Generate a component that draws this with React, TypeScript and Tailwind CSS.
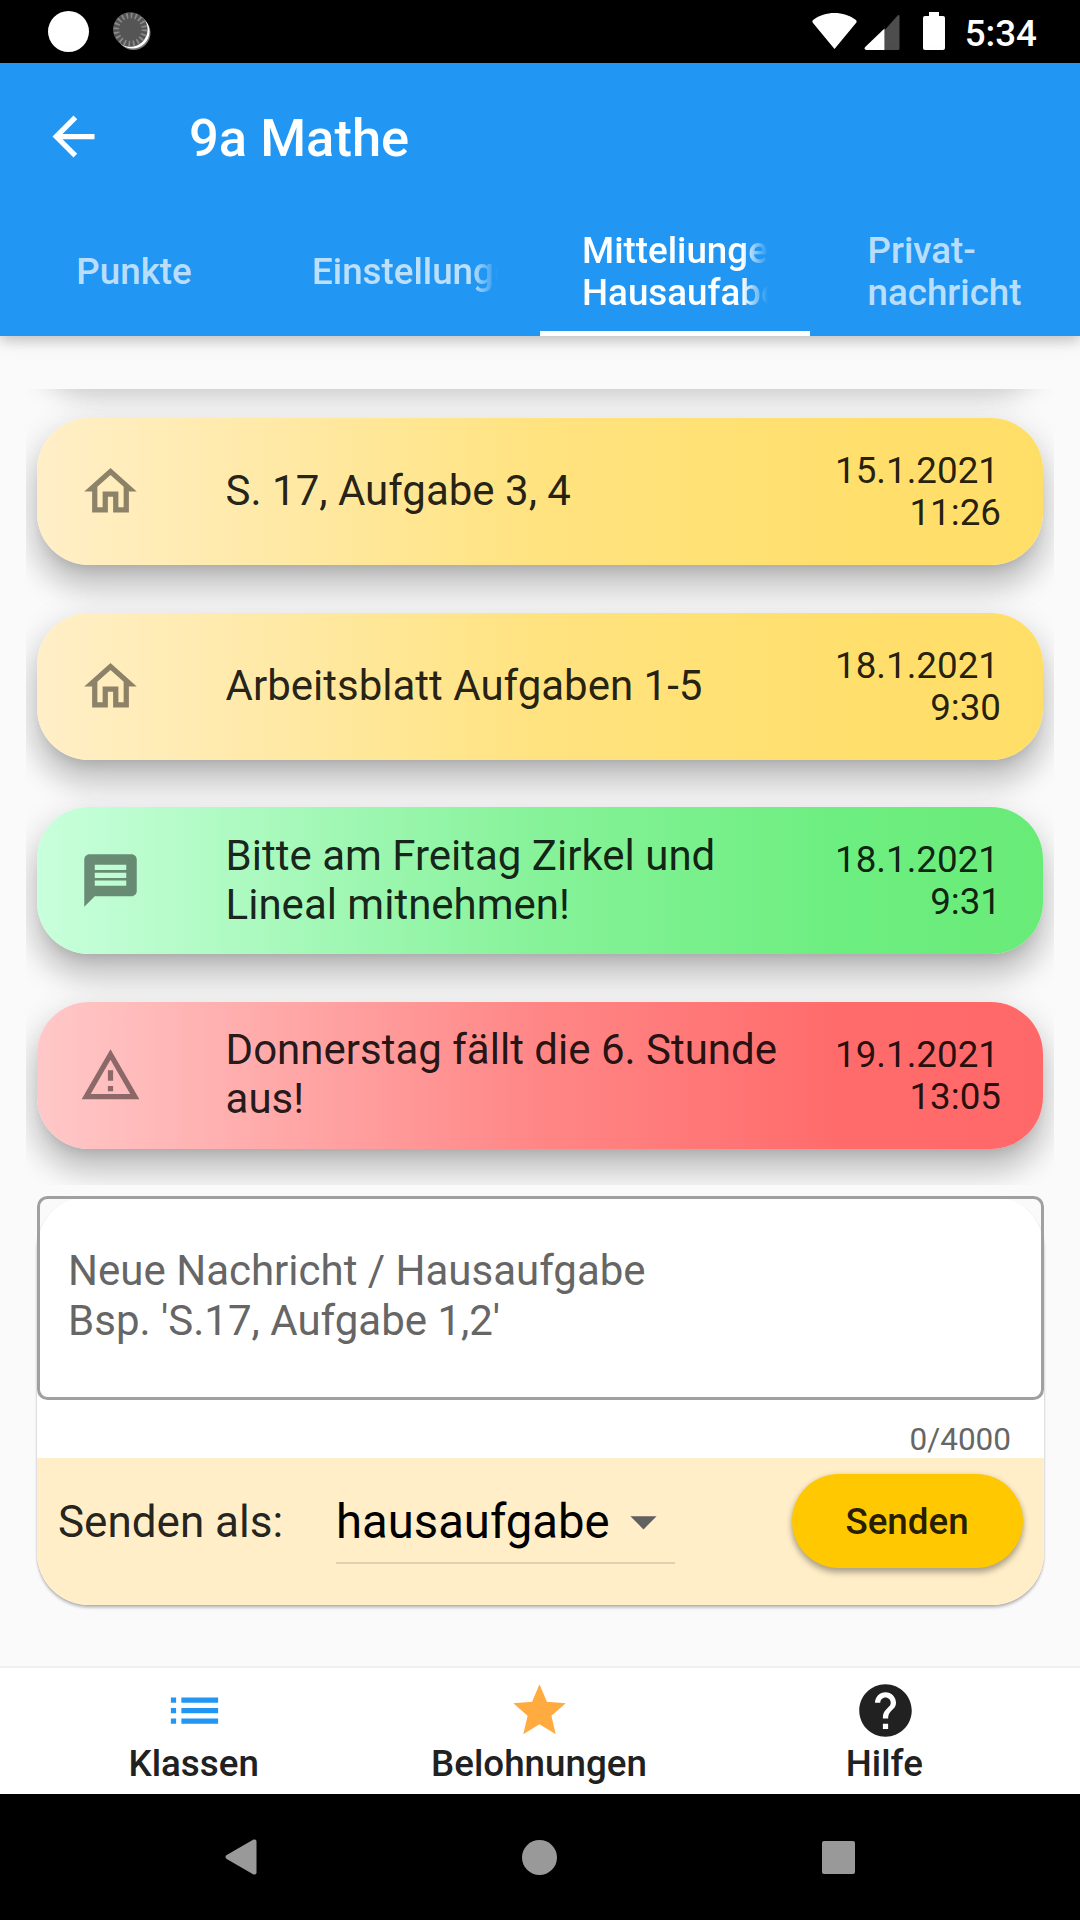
import {
  MdArrowBack,
  MdArrowDropDown,
  MdHelp,
  MdList,
  MdMessage,
  MdOutlineHome,
  MdStar,
} from "react-icons/md";

type Kind = "hausaufgabe" | "nachricht" | "warnung";

interface Message {
  kind: Kind;
  text: string;
  date: string;
  time: string;
}

const MESSAGES: Message[] = [
  { kind: "hausaufgabe", text: "S. 17, Aufgabe 3, 4", date: "15.1.2021", time: "11:26" },
  { kind: "hausaufgabe", text: "Arbeitsblatt Aufgaben 1-5", date: "18.1.2021", time: "9:30" },
  { kind: "nachricht", text: "Bitte am Freitag Zirkel und Lineal mitnehmen!", date: "18.1.2021", time: "9:31" },
  { kind: "warnung", text: "Donnerstag fällt die 6. Stunde aus!", date: "19.1.2021", time: "13:05" },
];

const CARD_BG: Record<Kind, string> = {
  hausaufgabe: "bg-[linear-gradient(90deg,#ffefc8_0%,#ffe380_50%,#ffdf6d_80%,#ffde68_100%)]",
  nachricht: "bg-[linear-gradient(90deg,#c8ffdc_0%,#86f299_50%,#6dee80_80%,#69eb78_100%)]",
  warnung: "bg-[linear-gradient(90deg,#ffc8c8_0%,#ff8686_50%,#ff6b6b_80%,#ff6868_100%)]",
};

const CARD_SHADOW =
  "shadow-[0_10px_13px_-8px_rgba(0,0,0,0.14),0_22px_30px_2px_rgba(0,0,0,0.18),0_8px_34px_4px_rgba(0,0,0,0.09)]";

const WarningOutline = () => (
  <svg viewBox="0 0 24 24" className="size-[63px]" fill="currentColor">
    <path d="M12 5.99 19.53 19H4.47L12 5.99M12 2 1 21h22L12 2zm1 14h-2v2h2v-2zm0-6h-2v4h2v-4z" />
  </svg>
);

const KindIcon = ({ kind }: { kind: Kind }) => {
  if (kind === "hausaufgabe") return <MdOutlineHome className="size-[63px]" />;
  if (kind === "nachricht") return <MdMessage className="size-[63px]" />;
  return <WarningOutline />;
};

const SyncDot = () => (
  <svg width="40" height="40" viewBox="0 0 40 40">
    <circle cx="20.5" cy="22" r="17" fill="#777" />
    <circle cx="19.5" cy="20.5" r="17" fill="#fff" />
    <circle cx="17.3" cy="18.5" r="17.3" fill="#555" />
    <circle cx="17.3" cy="18.5" r="14" fill="none" stroke="#8a8a8a" strokeWidth="5.5" strokeDasharray="1.7 2.698" />
  </svg>
);

const StatusBar = () => (
  <div className="flex h-[63px] items-start justify-between bg-black pl-12 pr-[43px]">
    <div className="flex pt-[11px]">
      <div className="size-[41px] rounded-full bg-white" />
      <div className="ml-6">
        <SyncDot />
      </div>
    </div>
    <div className="flex items-start pt-3">
      <svg width="45" height="38" viewBox="0 0 45 38" fill="#fff">
        <path d="M22.5 37 .8 10.8Q-.3 9 1.4 7.8C13-1.2 32-1.2 43.6 7.8Q45.3 9 44.2 10.8Z" />
      </svg>
      <svg width="36" height="38" viewBox="0 0 36 38" className="ml-[7px]">
        <path d="M20.5 18.2 33 4.2Q35.5 1.8 35.5 4.5V36.5Q35.5 38 34 38H20.5Z" fill="#4d4d4d" />
        <path d="M20.5 16.5V38H2Q-.5 37 1.2 35Z" fill="#fff" />
      </svg>
      <svg width="22" height="38" viewBox="0 0 22 38" className="ml-[23px]" fill="#fff">
        <rect x="6" width="10" height="8" />
        <rect y="4" width="22" height="34" rx="2" />
      </svg>
      <span className="ml-[20px] pt-px text-[36.75px] leading-[42px] font-medium text-white">5:34</span>
    </div>
  </div>
);

const AppBar = () => (
  <header className="relative z-10 h-[273px] bg-[#2196f3] text-white shadow-[0_5px_11px_rgba(0,0,0,0.16),0_2px_22px_rgba(0,0,0,0.1)]">
    <div className="flex h-[147px] items-center pl-[42px]">
      <MdArrowBack className="size-[63px]" />
      <h1 className="ml-[84px] pt-[2px] text-[52.5px] leading-[62px] font-medium">9a Mathe</h1>
    </div>
    <nav className="grid h-[126px] grid-cols-4 text-[36.75px] leading-[42px] font-medium">
      <div className="flex items-center justify-center pt-[3px] pr-[2px] pb-[5px] text-white/70">Punkte</div>
      <div className="flex items-center px-[42px] pt-[3px] pb-[5px] text-white/70">
        <span className="w-full overflow-hidden whitespace-nowrap [mask-image:linear-gradient(90deg,#000_86%,transparent_100%)]">
          Einstellungen
        </span>
      </div>
      <div className="flex items-center border-b-[5px] border-white px-[42px] pt-[3px]">
        <span className="w-full overflow-hidden whitespace-nowrap [mask-image:linear-gradient(90deg,#000_86%,transparent_100%)]">
          Mitteliungen
          <br />
          Hausaufaben
        </span>
      </div>
      <div className="flex items-center justify-center pt-[3px] pr-px pb-[5px] text-white/70">
        <span>
          Privat-
          <br />
          nachricht
        </span>
      </div>
    </nav>
  </header>
);

const MessageCard = ({ message }: { message: Message }) => (
  <div
    className={`flex h-[147px] shrink-0 items-center rounded-[52px] px-[42px] text-black/87 ${CARD_BG[message.kind]} ${CARD_SHADOW}`}
  >
    <div className="w-[147px] shrink-0 text-black/45">
      <KindIcon kind={message.kind} />
    </div>
    <p className="w-[570px] pb-[2px] text-[42px] leading-[49px]">{message.text}</p>
    <div className="ml-auto pt-px text-right text-[36.75px] leading-[42px]">
      <div className="pr-[2px]">{message.date}</div>
      <div>{message.time}</div>
    </div>
  </div>
);

const MessageList = () => (
  <div className="mx-[26px] mt-[53px] flex h-[796px] flex-col justify-end gap-[47.4px] overflow-hidden pr-[11px] pb-[36.4px] pl-[10.6px]">
    {/* card scrolled out above the list, only its shadow still shows */}
    <div className={`h-[147px] shrink-0 rounded-[52px] bg-[#ffe380] ${CARD_SHADOW}`} />
    {MESSAGES.map((m, i) => (
      <MessageCard key={i} message={m} />
    ))}
  </div>
);

const Composer = () => (
  <section className="mr-[36.5px] ml-[36.6px] mt-[11px] rounded-[52px] bg-white shadow-[0_3px_3px_rgba(0,0,0,0.2),0_1px_2px_rgba(0,0,0,0.14)]">
    <div className="h-[204px] rounded-[10.5px] border-[3px] border-[#a0a0a0] pt-[47px] pl-[28.5px] text-[42px] leading-[50px] text-[#666]">
      Neue Nachricht / Hausaufgabe
      <br />
      Bsp. 'S.17, Aufgabe 1,2'
    </div>
    <div className="flex h-[58px] items-end justify-end pr-[32.5px] text-[31.5px] leading-[37px] text-[#666]">
      0/4000
    </div>
    <div className="flex h-[147px] items-start rounded-b-[52px] bg-[#ffeec8] pl-[21.4px]">
      <span className="w-[278px] pt-[38px] text-[44px] leading-[52px] text-black/87">Senden als:</span>
      <div className="mt-[32px] flex h-[74px] w-[339px] items-center border-b-2 border-[#dfd0b4] pb-[9px] text-black">
        <span className="w-[276px] text-[47.25px] leading-[60px]">hausaufgabe</span>
        <MdArrowDropDown className="size-[63px] shrink-0 text-[#616161]" />
      </div>
      <button className="mt-[16px] mr-[21px] ml-auto h-[94px] w-[231px] rounded-full bg-[#ffc800] pt-px text-[36.75px] font-medium text-black/87 shadow-[0_5px_6px_rgba(0,0,0,0.26),0_1px_6px_rgba(0,0,0,0.14)]">
        Senden
      </button>
    </div>
  </section>
);

const BottomNav = () => (
  <nav className="grid h-[128px] grid-cols-3 border-t-2 border-[#f0f0f0] bg-white px-[22px] text-[36.75px] leading-[43px] font-medium text-[#212121]">
    <div className="flex flex-col items-center pt-[11px]">
      <MdList className="size-[63px] text-[#2196f3]" />
      <span className="pr-[2px]">Klassen</span>
    </div>
    <div className="flex flex-col items-center pt-[11px]">
      <MdStar className="size-[63px] text-[#ffab40]" />
      <span className="pr-[2px]">Belohnungen</span>
    </div>
    <div className="flex flex-col items-center pt-[11px]">
      <MdHelp className="size-[63px]" />
      <span className="pr-[2px]">Hilfe</span>
    </div>
  </nav>
);

const SystemNav = () => (
  <div className="flex h-[126px] items-center bg-black pl-[225px]">
    <svg width="32" height="36" viewBox="0 0 32 36" fill="#999">
      <path d="M1.3 16.3 28.5 .6Q31.5 -.3 31.5 2.5V33.5Q31.5 36.3 28.5 35.4L1.3 19.7Q-.4 18 1.3 16.3Z" />
    </svg>
    <div className="ml-[265px] size-[35px] rounded-full bg-[#999]" />
    <div className="ml-[265px] size-[33px] rounded-[2px] bg-[#999]" />
  </div>
);

export default function App() {
  return (
    <div className="flex h-[1920px] w-[1080px] flex-col overflow-hidden bg-[#fafafa] font-[Roboto,sans-serif]">
      <StatusBar />
      <AppBar />
      <main className="min-h-0 flex-1">
        <MessageList />
        <Composer />
      </main>
      <BottomNav />
      <SystemNav />
    </div>
  );
}
